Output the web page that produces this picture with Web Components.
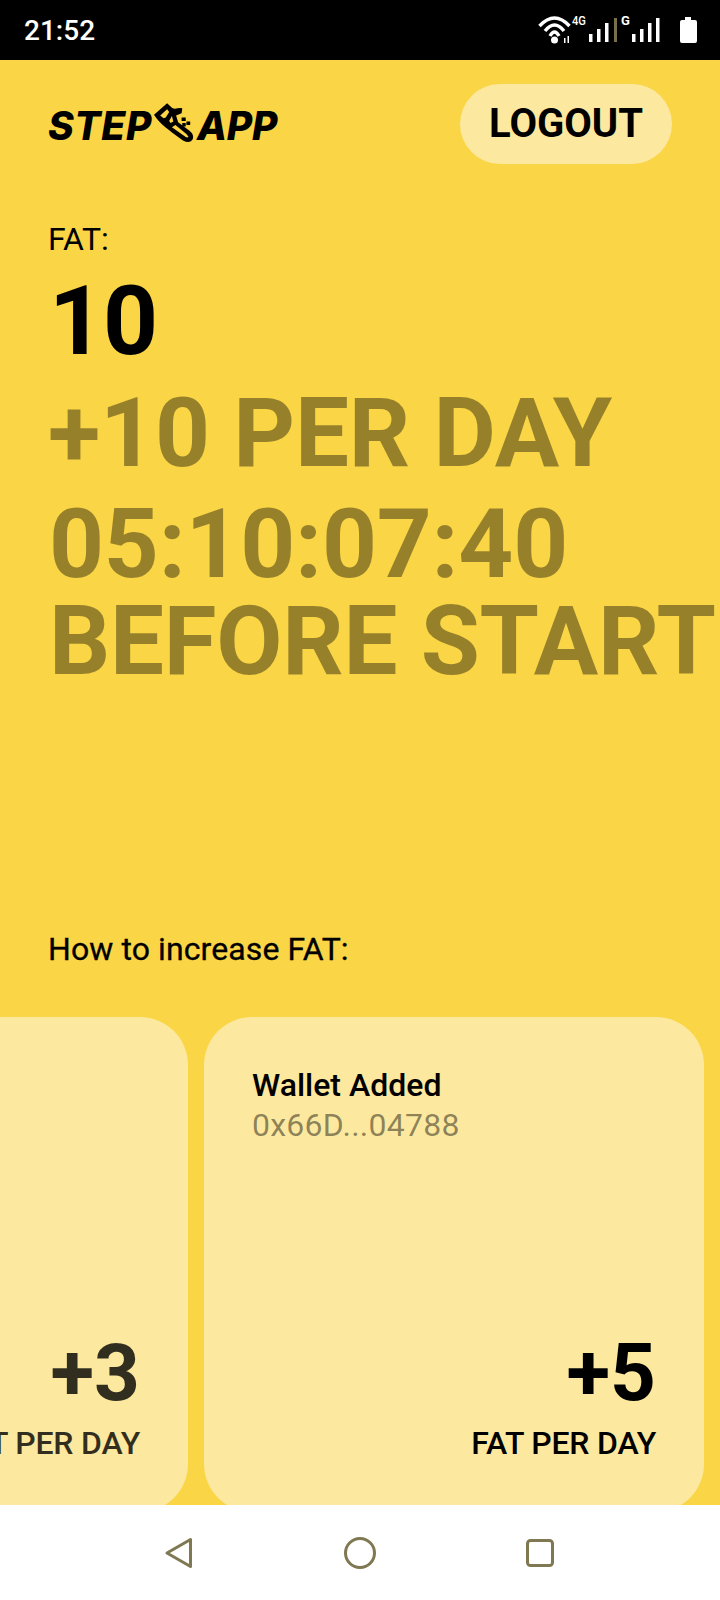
<!DOCTYPE html>
<html>
<head>
<meta charset="utf-8">
<style>
    html, body { margin: 0; padding: 0; background: #fff; }
    body { width: 720px; height: 1600px; overflow: hidden; font-family: Roboto, sans-serif; }
</style>
</head>
<body>
<app-screen></app-screen>
<script>
class StatusBar extends HTMLElement {
    constructor() {
        super();
        this.attachShadow({ mode: 'open' });
    }

    connectedCallback() {
        this.shadowRoot.innerHTML = `
        <style>
            :host { display: flex; align-items: center; justify-content: space-between; height: 60px; background: #000; color: #fff; padding: 0 22px 0 24px; box-sizing: border-box; }
            .time { font-size: 28px; font-weight: 500; }
            svg { display: block; }
            text { font-family: Roboto, sans-serif; }
        </style>
        <span class="time">21:52</span>
        <svg width="160" height="60" viewBox="538 0 160 60" fill="#fff">
            <g fill="none" stroke="#fff" stroke-width="3.4">
                <path d="M539.500 26Q554.500 10 569.500 26"/>
                <path d="M545 31Q554.500 19 564 31"/>
                <path d="M550 36Q554.500 28 559 36"/>
            </g>
            <circle cx="554.500" cy="40" r="3.500"/>
            <path d="M564 38h1.500v5H564zM567.500 36h1.500v7h-1.500z"/>
            <text x="572" y="25" font-size="13" font-weight="500" textLength="14" lengthAdjust="spacingAndGlyphs">4G</text>
            <rect x="589" y="34" width="3.500" height="8"/>
            <rect x="597" y="29" width="3.500" height="13"/>
            <rect x="605" y="23" width="3.500" height="19"/>
            <rect x="614" y="18" width="3" height="24" fill="#77704a"/>
            <text x="621" y="25" font-size="13" font-weight="700">G</text>
            <rect x="632" y="34" width="3.500" height="8"/>
            <rect x="640" y="29" width="3.500" height="13"/>
            <rect x="648" y="23" width="3.500" height="19"/>
            <rect x="656" y="18" width="3.500" height="24"/>
            <path d="M685 17h6v3h4a2 2 0 0 1 2 2v19a2 2 0 0 1-2 2h-13a2 2 0 0 1-2-2V22a2 2 0 0 1 2-2h3z"/>
        </svg>
        `;
    }
}

class StepLogo extends HTMLElement {
    constructor() {
        super();
        this.attachShadow({ mode: 'open' });
    }

    connectedCallback() {
        this.shadowRoot.innerHTML = `
        <style>
            :host { display: inline-flex; align-items: center; padding-top: 2px; font-family: Inter, "Liberation Sans", sans-serif; font-size: 39px; font-weight: 800; font-style: italic; color: #000; }
            .step { letter-spacing: .6px; }
            .app { letter-spacing: -.2px; }
            svg { display: block; margin: -4px 3px 0 2px; }
        </style>
        <span class="step">STEP</span>
        <svg width="40" height="42" viewBox="12 14 116 116">
            <path d="M12 48 50 15 64 28C74 34 84 26 94 30L92 44 76 50 82 70 114 94C127 103 130 118 118 126 106 130 96 124 84 114 58 94 30 76 12 48Z" fill="#000"/>
            <path d="M30 50 50 32 56 40 46 56 40 58Z" fill="#fad546"/>
            <path d="M56 66 64 52 68 68 60 72Z" fill="#fad546"/>
            <path d="M64 84 74 78 106 104 112 112C110 116 104 114 100 110Z" fill="#fad546"/>
            <path d="M92 56h12v10H92zM106 68h11v10h-11zM94 72h10v10H94z" fill="#000"/>
        </svg>
        <span class="app">APP</span>
        `;
    }
}

class PillButton extends HTMLElement {
    constructor() {
        super();
        this.attachShadow({ mode: 'open' });
    }

    connectedCallback() {
        this.shadowRoot.innerHTML = `
        <style>
            :host { display: inline-flex; align-items: center; justify-content: center; box-sizing: border-box; width: 212px; height: 80px; padding-bottom: 2px; border-radius: 40px; background: #fce89e; color: #000; font-size: 40px; font-weight: 700; }
        </style>
        <slot></slot>
        `;
    }
}

class FatStats extends HTMLElement {
    constructor() {
        super();
        this.attachShadow({ mode: 'open' });
    }

    connectedCallback() {
        this.shadowRoot.innerHTML = `
        <style>
            :host { display: block; padding-left: 48px; white-space: nowrap; }
            .label { font-size: 32px; line-height: 40px; color: #000; margin-top: 55px; }
            .value { font-size: 96px; font-weight: 700; line-height: 112px; color: #000; padding-left: 1px; margin-top: 6px; letter-spacing: -1px; }
            .dim { font-size: 96px; font-weight: 700; line-height: 97px; letter-spacing: -.25px; color: rgba(0,0,0,.4); }
            .per-day { margin-top: 8px; }
            .count { margin-top: 14px; padding-left: 1px; }
        </style>
        <div class="label">FAT:</div>
        <div class="value">10</div>
        <div class="dim per-day">+10 PER DAY</div>
        <div class="dim count">05:10:07:40<br>BEFORE START</div>
        `;
    }
}

class BonusCard extends HTMLElement {
    constructor() {
        super();
        this.attachShadow({ mode: 'open' });
    }

    connectedCallback() {
        this.shadowRoot.innerHTML = `
        <style>
            :host { display: flex; flex: 0 0 500px; box-sizing: border-box; height: 495px; flex-direction: column; padding: 48px 48px 0; border-radius: 48px; background: #fce89e; color: #000; }
            :host([faded]) > * { opacity: .8; }
            .title { font-size: 32px; line-height: 40px; font-weight: 500; min-height: 40px; }
            .sub { font-size: 32px; line-height: 40px; color: rgba(0,0,0,.45); letter-spacing: .25px; min-height: 40px; }
            .foot { margin-top: auto; margin-bottom: 49px; text-align: right; }
            .amount { font-size: 80px; line-height: 94px; font-weight: 700; }
            .unit { font-size: 32px; line-height: 40px; font-weight: 500; margin-top: 3px; letter-spacing: -.2px; }
        </style>
        <div class="title"><slot name="title"></slot></div>
        <div class="sub"><slot name="sub"></slot></div>
        <div class="foot">
            <div class="amount"><slot name="amount"></slot></div>
            <div class="unit">FAT PER DAY</div>
        </div>
        `;
    }
}

class NavBar extends HTMLElement {
    constructor() {
        super();
        this.attachShadow({ mode: 'open' });
    }

    connectedCallback() {
        this.shadowRoot.innerHTML = `
        <style>
            :host { display: flex; flex: 1; align-items: center; justify-content: center; gap: 144px; background: #fff; padding-top: 1px; }
            svg { display: block; fill: none; stroke: #7f7852; stroke-width: 3; stroke-linejoin: round; }
        </style>
        <svg width="36" height="36" viewBox="0 0 36 36"><path d="M5 18 28.500 4.500V31.500Z"/></svg>
        <svg width="36" height="36" viewBox="0 0 36 36"><circle cx="18" cy="18" r="14.500"/></svg>
        <svg width="36" height="36" viewBox="0 0 36 36"><rect x="5.500" y="5.500" width="25" height="25" rx="3"/></svg>
        `;
    }
}

class AppScreen extends HTMLElement {
    constructor() {
        super();
        this.attachShadow({ mode: 'open' });
    }

    connectedCallback() {
        this.shadowRoot.innerHTML = `
        <style>
            :host { display: flex; flex-direction: column; height: 1600px; }
            main { flex: 0 0 1445px; display: flex; flex-direction: column; overflow: hidden; background: #fad546; }
            header { display: flex; align-items: center; justify-content: space-between; padding: 24px 48px 0; }
            .how { font-size: 32px; line-height: 40px; font-weight: 400; letter-spacing: .1px; color: #000; padding-left: 48px; margin-top: auto; -webkit-text-stroke: .3px #000; }
            .cards { display: flex; justify-content: flex-end; gap: 16px; padding-right: 16px; margin-top: 48px; margin-bottom: -7px; }
        </style>
        <status-bar></status-bar>
        <main>
            <header>
                <step-logo></step-logo>
                <pill-button>LOGOUT</pill-button>
            </header>
            <fat-stats></fat-stats>
            <div class="how">How to increase FAT:</div>
            <div class="cards">
                <bonus-card faded>
                    <span slot="amount">+3</span>
                </bonus-card>
                <bonus-card>
                    <span slot="title">Wallet Added</span>
                    <span slot="sub">0x66D...04788</span>
                    <span slot="amount">+5</span>
                </bonus-card>
            </div>
        </main>
        <nav-bar></nav-bar>
        `;
    }
}

customElements.define('status-bar', StatusBar);
customElements.define('step-logo', StepLogo);
customElements.define('pill-button', PillButton);
customElements.define('fat-stats', FatStats);
customElements.define('bonus-card', BonusCard);
customElements.define('nav-bar', NavBar);
customElements.define('app-screen', AppScreen);
</script>
</body>
</html>
